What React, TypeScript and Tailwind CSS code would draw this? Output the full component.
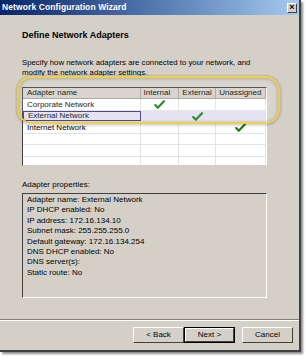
const rows = [
  { name: 'Corporate Network', col: 0, selected: false },
  { name: 'External Network', col: 1, selected: true },
  { name: 'Internet Network', col: 2, selected: false },
];

const props = [
  'Adapter name: External Network',
  'IP DHCP enabled: No',
  'IP address: 172.16.134.10',
  'Subnet mask: 255.255.255.0',
  'Default gateway: 172.16.134.254',
  'DNS DHCP enabled: No',
  'DNS server(s):',
  'Static route: No',
];

function Check() {
  return (
    <svg width="11" height="9" viewBox="0 0 11 9">
      <path d="M1.2 5 L3.8 7.8 L10 1.2" fill="none" stroke="#137a13" strokeWidth="2.1" strokeLinecap="round" strokeLinejoin="round" />
    </svg>
  );
}

function Button({ label, isDefault }: { label: string; isDefault?: boolean }) {
  return (
    <div className={`h-[16px] w-[51px] ${isDefault ? 'border border-black' : ''}`}>
      <div className="h-full w-full border-t border-l border-t-white border-l-white border-r border-b border-r-[#404040] border-b-[#404040] flex items-center justify-center text-[8px] text-black bg-[#d4d0c8]">
        {label}
      </div>
    </div>
  );
}

export default function App() {
  const heights = ['h-[12px]', 'h-[11px]', 'h-[12px]', 'h-[11px]', 'h-[12px]', 'h-[9px]'];
  return (
    <div className="w-[307px] h-[357px] bg-white overflow-hidden" style={{ fontFamily: '"Liberation Sans", Arial, sans-serif' }}>
      <div className="relative w-[301px] h-[352px] bg-[#d4d0c8] border-r-2 border-b-2 border-[#404040] shadow-[2px_2px_2px_rgba(0,0,0,0.45)] flex flex-col">
        {/* Title bar */}
        <div className="h-[15px] bg-gradient-to-r from-[#0a246a] to-[#a6caf0] flex items-center justify-between pl-[2px] pr-[2px]">
          <span className="text-white font-bold text-[8.5px] tracking-[0.1px]">Network Configuration Wizard</span>
          <div className="w-[10px] h-[10px] bg-[#d4d0c8] border-t border-l border-white border-r border-b border-r-[#404040] border-b-[#404040] flex items-center justify-center text-[9px] font-bold leading-none text-black">
            ×
          </div>
        </div>

        <div className="pl-[22px] pt-[15px] text-black">
          <h1 className="font-bold text-[9px] h-[11px] leading-[11px]">Define Network Adapters</h1>
          <p className="mt-[17px] text-[7.8px] leading-[10px] w-[250px]">
            Specify how network adapters are connected to your network, and modify the network adapter settings.
          </p>

          {/* Adapter table */}
          <div className="mt-[9px] w-[245px] h-[79px] bg-white border-t border-l border-t-[#404040] border-l-[#404040] border-r border-b border-r-white border-b-[#d4d0c8] text-[8px] overflow-hidden">
            <div className="flex h-[11px] bg-[#d4d0c8] border-b border-[#a0a0a0]">
              <div className="w-[118px] pl-[4px] leading-[10px] border-r border-[#a0a0a0]">Adapter name</div>
              <div className="w-[39px] pl-[3px] leading-[10px] border-r border-[#a0a0a0]">Internal</div>
              <div className="w-[37px] pl-[3px] leading-[10px] border-r border-[#a0a0a0]">External</div>
              <div className="w-[50px] pl-[3px] leading-[10px] border-r border-[#a0a0a0]">Unassigned</div>
            </div>
            {heights.map((h, i) => {
              const r = rows[i];
              return (
                <div key={i} className={`flex ${h} border-b border-[#e4e4e4] ${r?.selected ? 'bg-[#e2e0f0]' : ''}`}>
                  <div className={`w-[118px] pl-[4px] flex items-center ${r?.selected ? 'border border-[#34347a]' : 'border-r border-[#e4e4e4]'}`}>
                    {r?.name}
                  </div>
                  {[0, 1, 2].map((c) => (
                    <div key={c} className={`${c === 0 ? 'w-[39px]' : c === 1 ? 'w-[37px]' : 'w-[50px]'} border-r border-[#e4e4e4] flex items-center justify-center`}>
                      {r && r.col === c && <Check />}
                    </div>
                  ))}
                </div>
              );
            })}
          </div>

          <div className="mt-[14px] text-[8px] leading-[10px]">Adapter properties:</div>
          <div className="mt-[3px] w-[245px] h-[105px] border-t border-l border-t-[#404040] border-l-[#404040] border-r border-b border-r-white border-b-white pl-[4px] pt-[1px] text-[8px] leading-[10.4px]">
            {props.map((p) => (
              <div key={p}>{p}</div>
            ))}
          </div>
        </div>

        {/* Separator */}
        <div className="mt-[21px] h-[2px] border-t border-[#808080] border-b border-b-white" />

        {/* Buttons */}
        <div className="mt-[6px] flex justify-end pr-[6px]">
          <Button label="< Back" />
          <Button label="Next >" isDefault />
          <div className="w-[7px]" />
          <Button label="Cancel" />
        </div>

        {/* Yellow highlight annotation */}
        <svg className="absolute left-[15px] top-[74px]" width="268" height="54" viewBox="0 0 268 54">
          <defs>
            <filter id="glow" x="-10%" y="-30%" width="120%" height="160%">
              <feGaussianBlur stdDeviation="1.5" />
            </filter>
          </defs>
          <rect x="3" y="3.5" width="261" height="46" rx="14" fill="none" stroke="#000" strokeOpacity="0.25" strokeWidth="3" filter="url(#glow)" />
          <rect x="3" y="3" width="261" height="46" rx="14" fill="#ffffff" fillOpacity="0.12" stroke="#f3cf48" strokeWidth="1.8" />
        </svg>
      </div>
    </div>
  );
}
